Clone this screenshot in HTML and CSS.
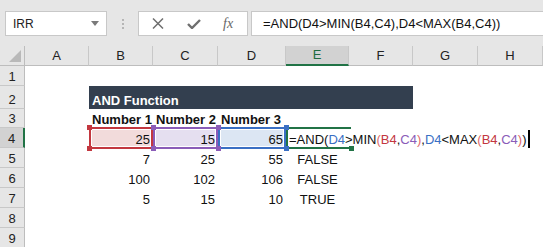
FILE: index.html
```html
<!DOCTYPE html>
<html lang="en">
<head>
  <meta charset="UTF-8" />
  <meta name="viewport" content="width=device-width, initial-scale=1.0" />
  <title>AND Function</title>
  <link rel="stylesheet" href="styles.css">
</head>
<body>
  <!-- Formula bar -->
  <div class="toolbar">
    <div class="namebox">
      <span>IRR</span>
      <svg width="8" height="5" viewBox="0 0 8 5"><path d="M0 0h8L4 5z" fill="#7a7a7a"/></svg>
    </div>
    <div class="grip"><i></i><i></i><i></i></div>
    <div class="fx-buttons">
      <svg class="btn-cancel" width="12" height="11" viewBox="0 0 12 11">
        <path d="M1 0.5l10 10M11 0.5l-10 10" stroke="#6f6f6f" stroke-width="1.5" fill="none"/>
      </svg>
      <svg class="btn-enter" width="14" height="10" viewBox="0 0 14 10">
        <path d="M1 5l4 4l8-8" stroke="#6f6f6f" stroke-width="2.4" fill="none"/>
      </svg>
      <span class="fx">fx</span>
    </div>
    <div class="formula">=AND(D4&gt;MIN(B4,C4),D4&lt;MAX(B4,C4))</div>
  </div>

  <!-- Grid -->
  <table class="sheet">
    <colgroup>
      <col style="width:25px"><col style="width:64px"><col style="width:64px"><col style="width:65px">
      <col style="width:68px"><col style="width:63px"><col style="width:64px"><col style="width:65px"><col style="width:65px">
    </colgroup>
    <thead>
      <tr>
        <th class="corner"><span class="tri"></span></th>
        <th>A</th><th>B</th><th>C</th><th>D</th><th class="active-col">E</th><th>F</th><th>G</th><th>H</th>
      </tr>
    </thead>
    <tbody>
      <tr class="r1"><th>1</th><td></td><td></td><td></td><td></td><td></td><td></td><td></td><td></td></tr>
      <tr class="r2"><th>2</th><td></td><td class="title" colspan="5">AND Function</td><td></td><td></td></tr>
      <tr class="r3"><th>3</th><td></td><td class="head">Number 1</td><td class="head">Number 2</td><td class="head">Number 3</td><td></td><td></td><td></td><td></td></tr>
      <tr class="r4">
        <th class="active-row">4</th>
        <td></td>
        <td class="num ref ref-b">25<span class="box"></span><i class="h tl"></i><i class="h bl"></i><i class="h tr"></i><i class="h br"></i></td>
        <td class="num ref ref-c">15<span class="box"></span><i class="h tl"></i><i class="h bl"></i><i class="h tr"></i><i class="h br"></i></td>
        <td class="num ref ref-d">65<span class="box"></span><i class="h tl"></i><i class="h bl"></i><i class="h tr"></i><i class="h br"></i></td>
        <td class="editing"><span class="box"></span><i class="h br"></i>=AND(<span class="c-d">D4</span>&gt;MIN<span class="c-p">(</span><span class="c-b">B4</span>,<span class="c-c">C4</span><span class="c-p">)</span>,<span class="c-d">D4</span>&lt;MAX<span class="c-p">(</span><span class="c-b">B4</span>,<span class="c-c">C4</span><span class="c-p">)</span>)<span class="cursor"></span></td>
        <td></td><td></td><td></td>
      </tr>
      <tr><th>5</th><td></td><td class="num">7</td><td class="num">25</td><td class="num">55</td><td class="bool">FALSE</td><td></td><td></td><td></td></tr>
      <tr><th>6</th><td></td><td class="num">100</td><td class="num">102</td><td class="num">106</td><td class="bool">FALSE</td><td></td><td></td><td></td></tr>
      <tr><th>7</th><td></td><td class="num">5</td><td class="num">15</td><td class="num">10</td><td class="bool">TRUE</td><td></td><td></td><td></td></tr>
      <tr><th>8</th><td></td><td></td><td></td><td></td><td></td><td></td><td></td><td></td></tr>
      <tr><th>9</th><td></td><td></td><td></td><td></td><td></td><td></td><td></td><td></td></tr>
    </tbody>
  </table>
</body>
</html>
```

FILE: styles.css
```css
* {
  box-sizing: border-box;
}

html, body {
  margin: 0;
  padding: 0;
}

body {
  font-family: 'Liberation Sans', Arial, sans-serif;
  font-size: 13px;
  color: #111;
  background: #fff;
  width: 543px;
  height: 247px;
  overflow: hidden;
}

/* formula bar */
.toolbar {
  display: flex;
  align-items: flex-start;
  height: 46px;
  padding: 11px 0 0 5px;
  background: #e6e6e6;
}

.namebox {
  width: 102px;
  height: 25px;
  background: #fff;
  border: 1px solid #c8c8c8;
  display: flex;
  align-items: center;
  justify-content: space-between;
  padding: 0 7px 0 7px;
  font-size: 12px;
  color: #222;
}

.grip {
  width: 31px;
  display: flex;
  flex-direction: column;
  align-items: center;
  gap: 2px;
  padding-top: 8px;
}

.grip i {
  width: 2px;
  height: 2px;
  background: #b5b5b5;
}

.fx-buttons {
  width: 110px;
  height: 25px;
  background: #fff;
  border: 1px solid #c8c8c8;
  display: flex;
  align-items: center;
  padding-left: 13px;
}

.btn-enter {
  margin-left: 23px;
}

.fx {
  margin-left: 22px;
  font-family: 'Liberation Serif', 'Times New Roman', serif;
  font-style: italic;
  font-size: 14px;
  color: #666;
}

.formula {
  flex: 1;
  height: 25px;
  margin-left: 3px;
  background: #fff;
  border: 1px solid #c8c8c8;
  border-right: none;
  padding-left: 11px;
  line-height: 23px;
  color: #111;
}

/* grid */
.sheet {
  border-collapse: separate;
  border-spacing: 0;
  table-layout: fixed;
  width: 543px;
}

.sheet th, .sheet td {
  padding: 0 3px;
  height: 20px;
  line-height: 17px;
  white-space: nowrap;
  overflow: visible;
  vertical-align: bottom;
}

.sheet thead th {
  background: #e6e6e6;
  font-weight: normal;
  color: #222;
  border-right: 1px solid #c8c8c8;
  border-bottom: 1px solid #bdbdbd;
  text-align: center;
  vertical-align: middle;
  line-height: 19px;
}

.sheet thead th.corner {
  position: relative;
  border-right-color: #bdbdbd;
}

.tri {
  position: absolute;
  right: 3px;
  bottom: 3px;
  width: 0;
  height: 0;
  border-left: 12px solid transparent;
  border-bottom: 12px solid #b9b9b9;
}

.sheet thead th.active-col {
  background: #d2d2d2;
  color: #1e6b41;
  border-bottom: 2px solid #217346;
  line-height: 18px;
}

.sheet tbody th {
  background: #e6e6e6;
  font-weight: normal;
  color: #222;
  border-right: 1px solid #bdbdbd;
  border-bottom: 1px solid #c8c8c8;
  text-align: center;
  padding: 0;
}

.sheet tbody th.active-row {
  background: #d2d2d2;
  border-right: 2px solid #217346;
}

.r1 th, .r1 td { height: 20px; }
.r2 th, .r2 td { height: 23px; }
.r3 th, .r3 td { height: 19px; }

.title {
  background: #333f4f;
  color: #fff;
  font-weight: bold;
  vertical-align: middle;
}

.head {
  font-weight: bold;
  color: #111;
}

.num {
  text-align: right;
}

.bool {
  text-align: center;
}

/* referenced ranges */
.ref, .editing {
  position: relative;
}

.ref .box {
  position: absolute;
  top: -1px;
  bottom: -1px;
  left: 0;
  right: 0;
  border: 2px solid var(--c);
  box-shadow: inset 0 0 0 1px #fff;
}

.ref .h, .editing .h {
  position: absolute;
  width: 5px;
  height: 5px;
  background: var(--c);
}

.h.tl { left: -2px; top: -3px; }
.h.bl { left: -2px; bottom: -3px; }
.h.tr { right: -3px; top: -3px; }
.h.br { right: -3px; bottom: -3px; }

.ref-b { --c: #c3373f; background: #f2dbdb; }
.ref-c { --c: #8a5cb8; background: #e5dff0; }
.ref-d { --c: #3a6fc4; background: #dce6f3; }

.ref-b .box, .ref-b .h { z-index: 1; }
.ref-d .box, .ref-d .h { z-index: 2; }
.ref-c .box, .ref-c .h { z-index: 3; }

.editing {
  --c: #217346;
}

.editing .box {
  position: absolute;
  top: -1px;
  bottom: -1px;
  left: 0;
  right: -2px;
  border-top: 2px solid #217346;
  border-bottom: 2px solid #217346;
  border-left: 2px solid #217346;
}

.editing .h.br {
  right: -5px;
}

.c-d { color: #3a6fc4; }
.c-b { color: #c3373f; }
.c-c { color: #8a5cb8; }
.c-p { color: #e06a6a; }

.cursor {
  display: inline-block;
  width: 2px;
  height: 18px;
  margin-left: 2px;
  background: #000;
  vertical-align: -4px;
}
```
